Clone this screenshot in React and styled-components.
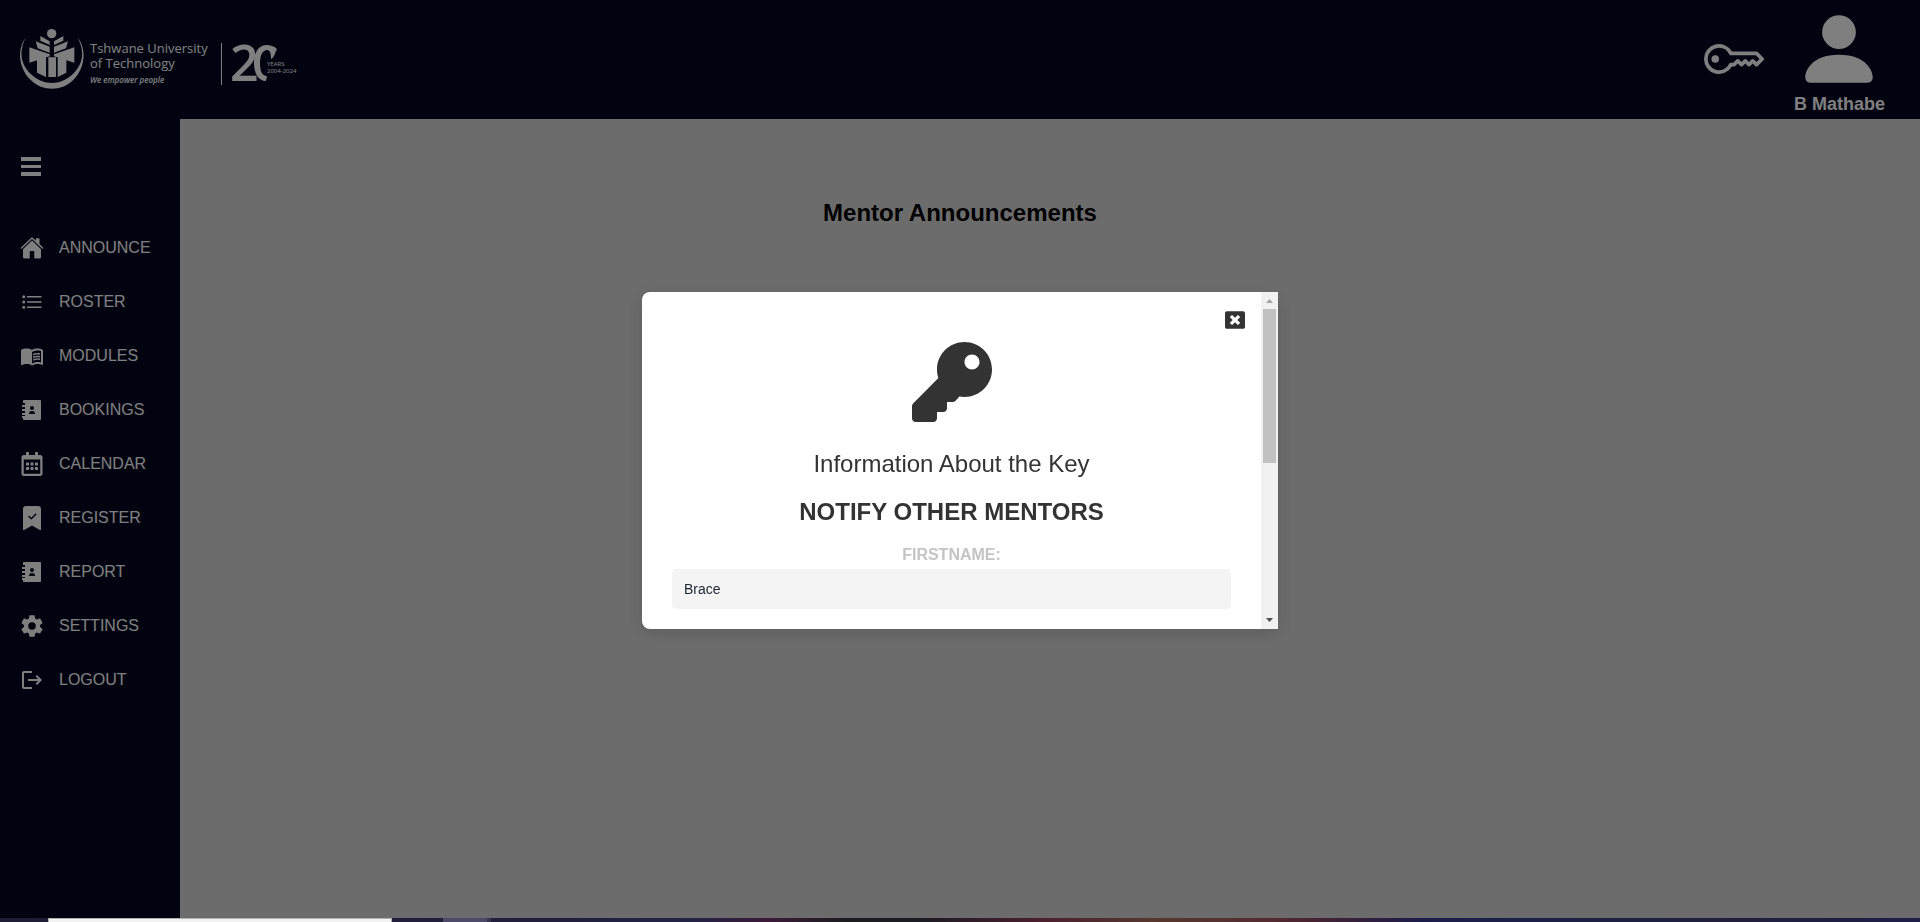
import React from "react";
import styled, { createGlobalStyle } from "styled-components";
import { IoHome, IoListOutline, IoSettingsSharp } from "react-icons/io5";
import { MdMenuBook, MdLogout } from "react-icons/md";
import { FaKey, FaRegCalendarAlt, FaWindowClose } from "react-icons/fa";
import { BsBookmarkCheckFill, BsKey, BsPersonFill } from "react-icons/bs";

const GlobalStyle = createGlobalStyle`
  *, *::before, *::after { box-sizing: border-box; }
  body {
    margin: 0;
    font-family: "Liberation Sans", Arial, sans-serif;
    background: #d9d9d9;
  }
`;

const NAVY = "#030821";

const Page = styled.div`
  display: flex;
  flex-direction: column;
  min-height: 100vh;
`;

const Header = styled.header`
  display: flex;
  align-items: center;
  justify-content: space-between;
  height: 119px;
  padding: 0 35px 2px 20px;
  background: ${NAVY};
  color: #fff;
`;

const Brand = styled.a`
  display: flex;
  align-items: center;
  color: inherit;
  text-decoration: none;
`;

const BrandText = styled.span`
  display: flex;
  flex-direction: column;
  margin: 10px 13px 0 6px;
  font-family: "Open Sans", sans-serif;
  font-size: 13px;
  font-weight: 500;
  line-height: 15px;
  white-space: nowrap;
`;

const Motto = styled.span`
  margin-top: 3px;
  font-size: 8px;
  font-style: italic;
  font-weight: 600;
  line-height: 12px;
`;

const BrandRule = styled.span`
  width: 1px;
  height: 42px;
  margin-top: 10px;
  background: #fff;
`;

const Anniversary = styled.svg`
  margin: 10px 0 0 8px;
  overflow: visible;
`;

const Actions = styled.div`
  display: flex;
  align-items: center;
  gap: 30px;
`;

const IconButton = styled.button`
  display: flex;
  padding: 0;
  border: 0;
  background: none;
  color: inherit;
  cursor: pointer;
`;

const Profile = styled.div`
  display: flex;
  flex-direction: column;
  align-items: center;
  font-size: 18px;
  font-weight: 700;
  line-height: 20px;
`;

const Body = styled.div`
  display: flex;
  flex: 1;
`;

const Sidebar = styled.aside`
  flex: none;
  width: 180px;
  padding: 37px 20px 20px;
  background: ${NAVY};
  color: #fff;
`;

const Nav = styled.nav`
  display: flex;
  flex-direction: column;
  margin-top: 44px;
`;

const NavLink = styled.a`
  display: flex;
  align-items: center;
  gap: 15px;
  height: 54px;
  color: inherit;
  font-size: 16px;
  line-height: 20px;
  text-decoration: none;

  svg { flex: none; }
`;

const Main = styled.main`
  flex: 1;
  padding: 80px 180px 0 0;
  text-align: center;
`;

const PageTitle = styled.h1`
  margin: 0;
  color: #000;
  font-size: 24px;
  line-height: 28px;
`;

const Overlay = styled.div`
  position: fixed;
  inset: 0;
  display: flex;
  align-items: center;
  justify-content: center;
  padding-bottom: 1px;
  background: rgba(0, 0, 0, 0.5);
`;

const Dialog = styled.section`
  display: flex;
  width: 636px;
  max-width: 90vw;
  height: 337px;
  overflow: hidden;
  border-radius: 8px 0 0 8px;
  background: #fff;
  box-shadow: 0 4px 16px rgba(0, 0, 0, 0.15);
  color: #333;
`;

const DialogContent = styled.div`
  position: relative;
  display: flex;
  flex: 1;
  flex-direction: column;
  align-items: center;
  padding: 50px 30px 20px;
`;

const CloseButton = styled(IconButton)`
  position: absolute;
  top: 18px;
  right: 16px;
`;

const DialogTitle = styled.h2`
  margin: 26px 0 0;
  font-size: 24px;
  font-weight: ${(p) => (p.$strong ? 700 : 400)};
  line-height: 32px;

  & + & { margin-top: 16px; }
`;

const Field = styled.div`
  display: flex;
  flex-direction: column;
  width: 100%;
  margin-top: 17px;
`;

const Label = styled.label`
  margin-bottom: 4px;
  color: #c4c4c4;
  font-size: 16px;
  font-weight: 700;
  line-height: 20px;
  text-align: center;
`;

const Input = styled.input`
  width: 100%;
  height: 40px;
  padding: 0 12px;
  border: 0;
  border-radius: 5px;
  background: #f4f4f4;
  color: #1b2433;
  font-family: inherit;
  font-size: 14px;
`;

const ScrollTrack = styled.div`
  display: flex;
  flex: none;
  flex-direction: column;
  align-items: center;
  justify-content: space-between;
  width: 17px;
  background: #f1f1f1;
`;

const ScrollThumb = styled.div`
  width: 13px;
  height: 154px;
  margin-bottom: auto;
  background: #c1c1c1;
`;

const Taskbar = styled.footer`
  position: fixed;
  right: 0;
  bottom: 0;
  left: 0;
  display: flex;
  height: 4px;
  padding-left: 48px;
  background: linear-gradient(
    90deg,
    #1c1c34 0%, #20203e 30%, #232346 36%, #3c1a38 40%, #1c1c20 44%, #1c1c24 48%,
    #4a1f2e 54%, #56382f 60%, #542c30 66%, #4a2430 68%, #1c1c4a 74%, #1a2048 78%, #20203c 90%, #1e1e48 100%
  );
`;

const ActiveWindow = styled.span`
  width: 344px;
  border: solid #b0b0b0;
  border-width: 1px 1px 0;
  background: #f2f2f2;
`;

const IdleWindow = styled.span`
  width: 48px;
  margin-left: 51px;
  border-right: 4px solid #34344e;
  background: #4c4a68;
`;

function Emblem() {
  return (
    <svg width="64" height="60" viewBox="60 87 192 180" fill="currentColor" aria-hidden="true">
      <path d="M77 113 C51 145 54 204 93 241 C128 275 184 275 219 241 C257 204 260 145 233 113 C255 154 250 192 218 223 C181 258 130 258 93 223 C61 192 56 154 77 113Z" />
      <circle cx="155" cy="101" r="14" />
      <path d="M121 108 L149 124 V135 L121 122Z M190 108 L162 124 V135 L190 122Z" />
      <path d="M107 124 L149 140 V158 L113 145Z M204 124 L162 140 V158 L198 145Z" />
      <path d="M88 142 L149 163 V169 L88 188Z M223 142 L162 163 V169 L223 188Z" />
      <path d="M111 178 L138 172 V231 L111 218Z M145 172 H168 V231 H145Z M173 172 L199 178 V218 L173 231Z" />
    </svg>
  );
}

function TwentyYears() {
  return (
    <Anniversary width="75" height="42" viewBox="0 0 75 42" fill="currentColor" role="img" aria-label="20 years, 2004-2024">
      <text x="0" y="38" fontFamily="'Open Sans', sans-serif" fontSize="50" fontWeight="600">2</text>
      <path d="M47 6 C44 3 40 2 37 2 C28 2 24 10 24 20 C24 30 28 38 36 38 L37 33 C32 33 30 28 30 20 C30 12 33 7 37 7 C40 7 41 10 41 16 C44 15 45 10 47 6Z" />
      <text x="37" y="23" fontFamily="'Open Sans', sans-serif" fontSize="6">YEARS</text>
      <text x="37" y="30" fontFamily="'Open Sans', sans-serif" fontSize="6">2004-2024</text>
    </Anniversary>
  );
}

function ContactBook({ size }) {
  return (
    <svg width={size} height={size} viewBox="0 0 24 24" fill="currentColor" aria-hidden="true">
      <path
        fillRule="evenodd"
        d="M3 3a1 1 0 0 1 1-1h16a1 1 0 0 1 1 1v18a1 1 0 0 1-1 1H4a1 1 0 0 1-1-1v-1H2v-2h3v-1H2v-2h3v-2H2v-2h3V9H2V7h3V5H3zM12 8a2 2 0 1 0 0 4 2 2 0 0 0 0-4zM9 16h6c0-2-1-3-3-3s-3 1-3 3z"
      />
    </svg>
  );
}

const links = [
  ["ANNOUNCE", IoHome],
  ["ROSTER", IoListOutline],
  ["MODULES", MdMenuBook],
  ["BOOKINGS", ContactBook],
  ["CALENDAR", FaRegCalendarAlt],
  ["REGISTER", BsBookmarkCheckFill],
  ["REPORT", ContactBook],
  ["SETTINGS", IoSettingsSharp],
  ["LOGOUT", MdLogout],
];

export default function App() {
  return (
    <Page>
      <GlobalStyle />
      <Header>
        <Brand href="#home">
          <Emblem />
          <BrandText>
            <span>Tshwane University</span>
            <span>of Technology</span>
            <Motto>We empower people</Motto>
          </BrandText>
          <BrandRule />
          <TwentyYears />
        </Brand>
        <Actions>
          <IconButton type="button" aria-label="Key"><BsKey size={60} /></IconButton>
          <Profile>
            <BsPersonFill size={90} />
            <span>B Mathabe</span>
          </Profile>
        </Actions>
      </Header>
      <Body>
        <Sidebar>
          <IconButton type="button" aria-label="Toggle menu">
            <svg width="22" height="21" viewBox="0 0 22 21" fill="currentColor" aria-hidden="true">
              <path d="M1 1h20v4H1z M1 9h20v3H1z M1 16h20v4H1z" />
            </svg>
          </IconButton>
          <Nav>
            {links.map(([label, Icon]) => (
              <NavLink key={label} href={`#${label.toLowerCase()}`}>
                <Icon size={24} />
                <span>{label}</span>
              </NavLink>
            ))}
          </Nav>
        </Sidebar>
        <Main>
          <PageTitle>Mentor Announcements</PageTitle>
        </Main>
      </Body>
      <Overlay>
        <Dialog role="dialog" aria-modal="true" aria-labelledby="dialog-title">
          <DialogContent>
            <CloseButton type="button" aria-label="Close"><FaWindowClose size={20} /></CloseButton>
            <FaKey size={80} />
            <DialogTitle id="dialog-title">Information About the Key</DialogTitle>
            <DialogTitle $strong>NOTIFY OTHER MENTORS</DialogTitle>
            <Field>
              <Label htmlFor="firstname">FIRSTNAME:</Label>
              <Input id="firstname" type="text" defaultValue="Brace" />
            </Field>
          </DialogContent>
          <ScrollTrack aria-hidden="true">
            <svg width="17" height="17" viewBox="0 0 17 17"><path d="M5 11h7L8.500 7z" fill="#a3a3a3" /></svg>
            <ScrollThumb />
            <svg width="17" height="17" viewBox="0 0 17 17"><path d="M5 6h7L8.500 10z" fill="#505050" /></svg>
          </ScrollTrack>
        </Dialog>
      </Overlay>
      <Taskbar aria-hidden="true">
        <ActiveWindow />
        <IdleWindow />
      </Taskbar>
    </Page>
  );
}
